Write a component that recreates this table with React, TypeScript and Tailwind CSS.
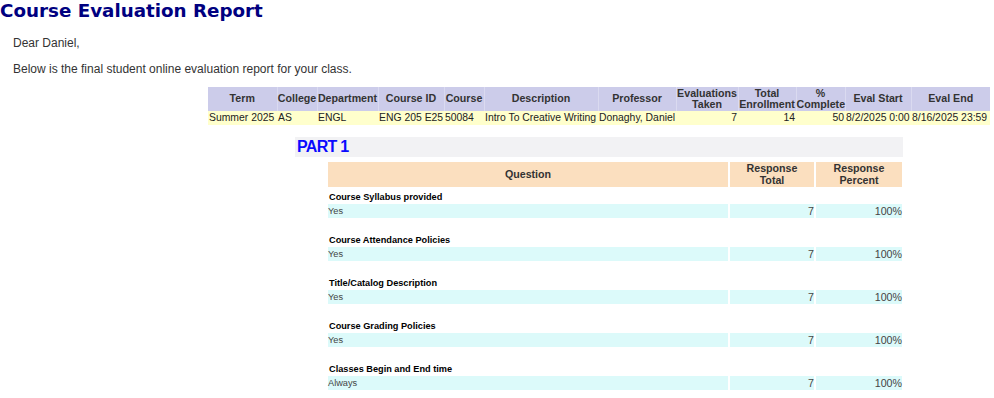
const COURSE_COLS = [
  { label: ["Term"], w: 69 },
  { label: ["College"], w: 40 },
  { label: ["Department"], w: 61 },
  { label: ["Course ID"], w: 66 },
  { label: ["Course"], w: 40 },
  { label: ["Description"], w: 114 },
  { label: ["Professor"], w: 78 },
  { label: ["Evaluations", "Taken"], w: 62 },
  { label: ["Total", "Enrollment"], w: 58 },
  { label: ["%", "Complete"], w: 49 },
  { label: ["Eval Start"], w: 66 },
  { label: ["Eval End"], w: 79 },
];

const COURSE_ROW: { text: string; right?: boolean }[] = [
  { text: "Summer 2025" },
  { text: "AS" },
  { text: "ENGL" },
  { text: "ENG 205 E25" },
  { text: "50084" },
  { text: "Intro To Creative Writing" },
  { text: "Donaghy, Daniel" },
  { text: "7", right: true },
  { text: "14", right: true },
  { text: "50", right: true },
  { text: "8/2/2025 0:00" },
  { text: "8/16/2025 23:59" },
];

const QUESTIONS = [
  { q: "Course Syllabus provided", a: "Yes", total: 7, pct: "100%" },
  { q: "Course Attendance Policies", a: "Yes", total: 7, pct: "100%" },
  { q: "Title/Catalog Description", a: "Yes", total: 7, pct: "100%" },
  { q: "Course Grading Policies", a: "Yes", total: 7, pct: "100%" },
  { q: "Classes Begin and End time", a: "Always", total: 7, pct: "100%" },
];

export default function App() {
  return (
    <div className="w-[994px] h-[398px] overflow-hidden bg-white text-[#333] font-['Liberation_Sans',Arial,sans-serif]">
      <h1 className="font-['DejaVu_Sans',Verdana,sans-serif] font-bold text-[18.3px] leading-[21px] text-[#000080]">
        Course Evaluation Report
      </h1>

      <div className="pl-[13px] text-[12px] leading-[14px]">
        <p className="mt-[15px]">Dear Daniel,</p>
        <p className="mt-[12px]">Below is the final student online evaluation report for your class.</p>
      </div>

      {/* course summary */}
      <table className="ml-[208px] mt-[11px] table-fixed border-collapse w-[782px]">
        <colgroup>
          {COURSE_COLS.map((c, i) => (
            <col key={i} style={{ width: c.w }} />
          ))}
        </colgroup>
        <thead>
          <tr className="h-[24px] bg-[#ccccea] text-[8pt]">
            {COURSE_COLS.map((c, i) => (
              <th
                key={i}
                className={
                  "p-0 font-bold text-center align-middle leading-[11.5px] whitespace-nowrap text-[#333] " +
                  (i > 0 ? "border-l border-[#dadaf0]" : "")
                }
              >
                {c.label.map((l) => (
                  <div key={l}>{l}</div>
                ))}
              </th>
            ))}
          </tr>
        </thead>
        <tbody>
          <tr className="h-[14px] bg-[#ffffcc] text-[#222] text-[10.4px]">
            {COURSE_ROW.map((c, i) => (
              <td
                key={i}
                className={
                  "p-0 px-px leading-[14px] whitespace-nowrap " +
                  (c.right ? "text-right" : "text-left")
                }
              >
                {c.text}
              </td>
            ))}
          </tr>
        </tbody>
      </table>

      {/* part heading */}
      <div className="ml-[295px] mt-[12px] w-[608px] h-[20px] bg-[#f2f2f4] pl-[2px] text-[16px] leading-[20px] font-bold tracking-[-0.7px] text-[#0a0aff]">
        PART 1
      </div>

      {/* questions */}
      <table className="ml-[326px] mt-[5px] table-fixed border-separate [border-spacing:2px_0] w-[578px]">
        <colgroup>
          <col style={{ width: 400 }} />
          <col style={{ width: 84 }} />
          <col style={{ width: 86 }} />
        </colgroup>
        <thead>
          <tr className="h-[25px] bg-[#fbdfbf] text-[8pt] leading-[11.5px] text-[#333]">
            <th className="p-0 font-bold text-center align-middle">Question</th>
            <th className="p-0 font-bold text-center align-middle">
              <div>Response</div>
              <div>Total</div>
            </th>
            <th className="p-0 font-bold text-center align-middle">
              <div>Response</div>
              <div>Percent</div>
            </th>
          </tr>
        </thead>
        <tbody className="text-[9.2px]">
          <tr className="h-px">
            <td colSpan={3} className="p-0" />
          </tr>
          {QUESTIONS.map((q, i) => (
            <QuestionRows key={q.q} item={q} last={i === QUESTIONS.length - 1} />
          ))}
        </tbody>
      </table>
    </div>
  );
}

function QuestionRows({
  item,
  last,
}: {
  item: { q: string; a: string; total: number; pct: string };
  last: boolean;
}) {
  return (
    <>
      <tr className="h-[16px]">
        <td colSpan={3} className="p-0 pl-px pb-px align-bottom leading-[12px] font-bold text-black">
          {item.q}
        </td>
      </tr>
      <tr className="h-[14px] bg-[#dcfafa] text-[#444] leading-[14px]">
        <td className="p-0 align-middle">{item.a}</td>
        <td className="p-0 text-right align-middle text-[8pt]">{item.total}</td>
        <td className="p-0 text-right align-middle text-[8pt]">{item.pct}</td>
      </tr>
      {!last && (
        <tr className="h-[13px]">
          <td colSpan={3} className="p-0" />
        </tr>
      )}
    </>
  );
}
